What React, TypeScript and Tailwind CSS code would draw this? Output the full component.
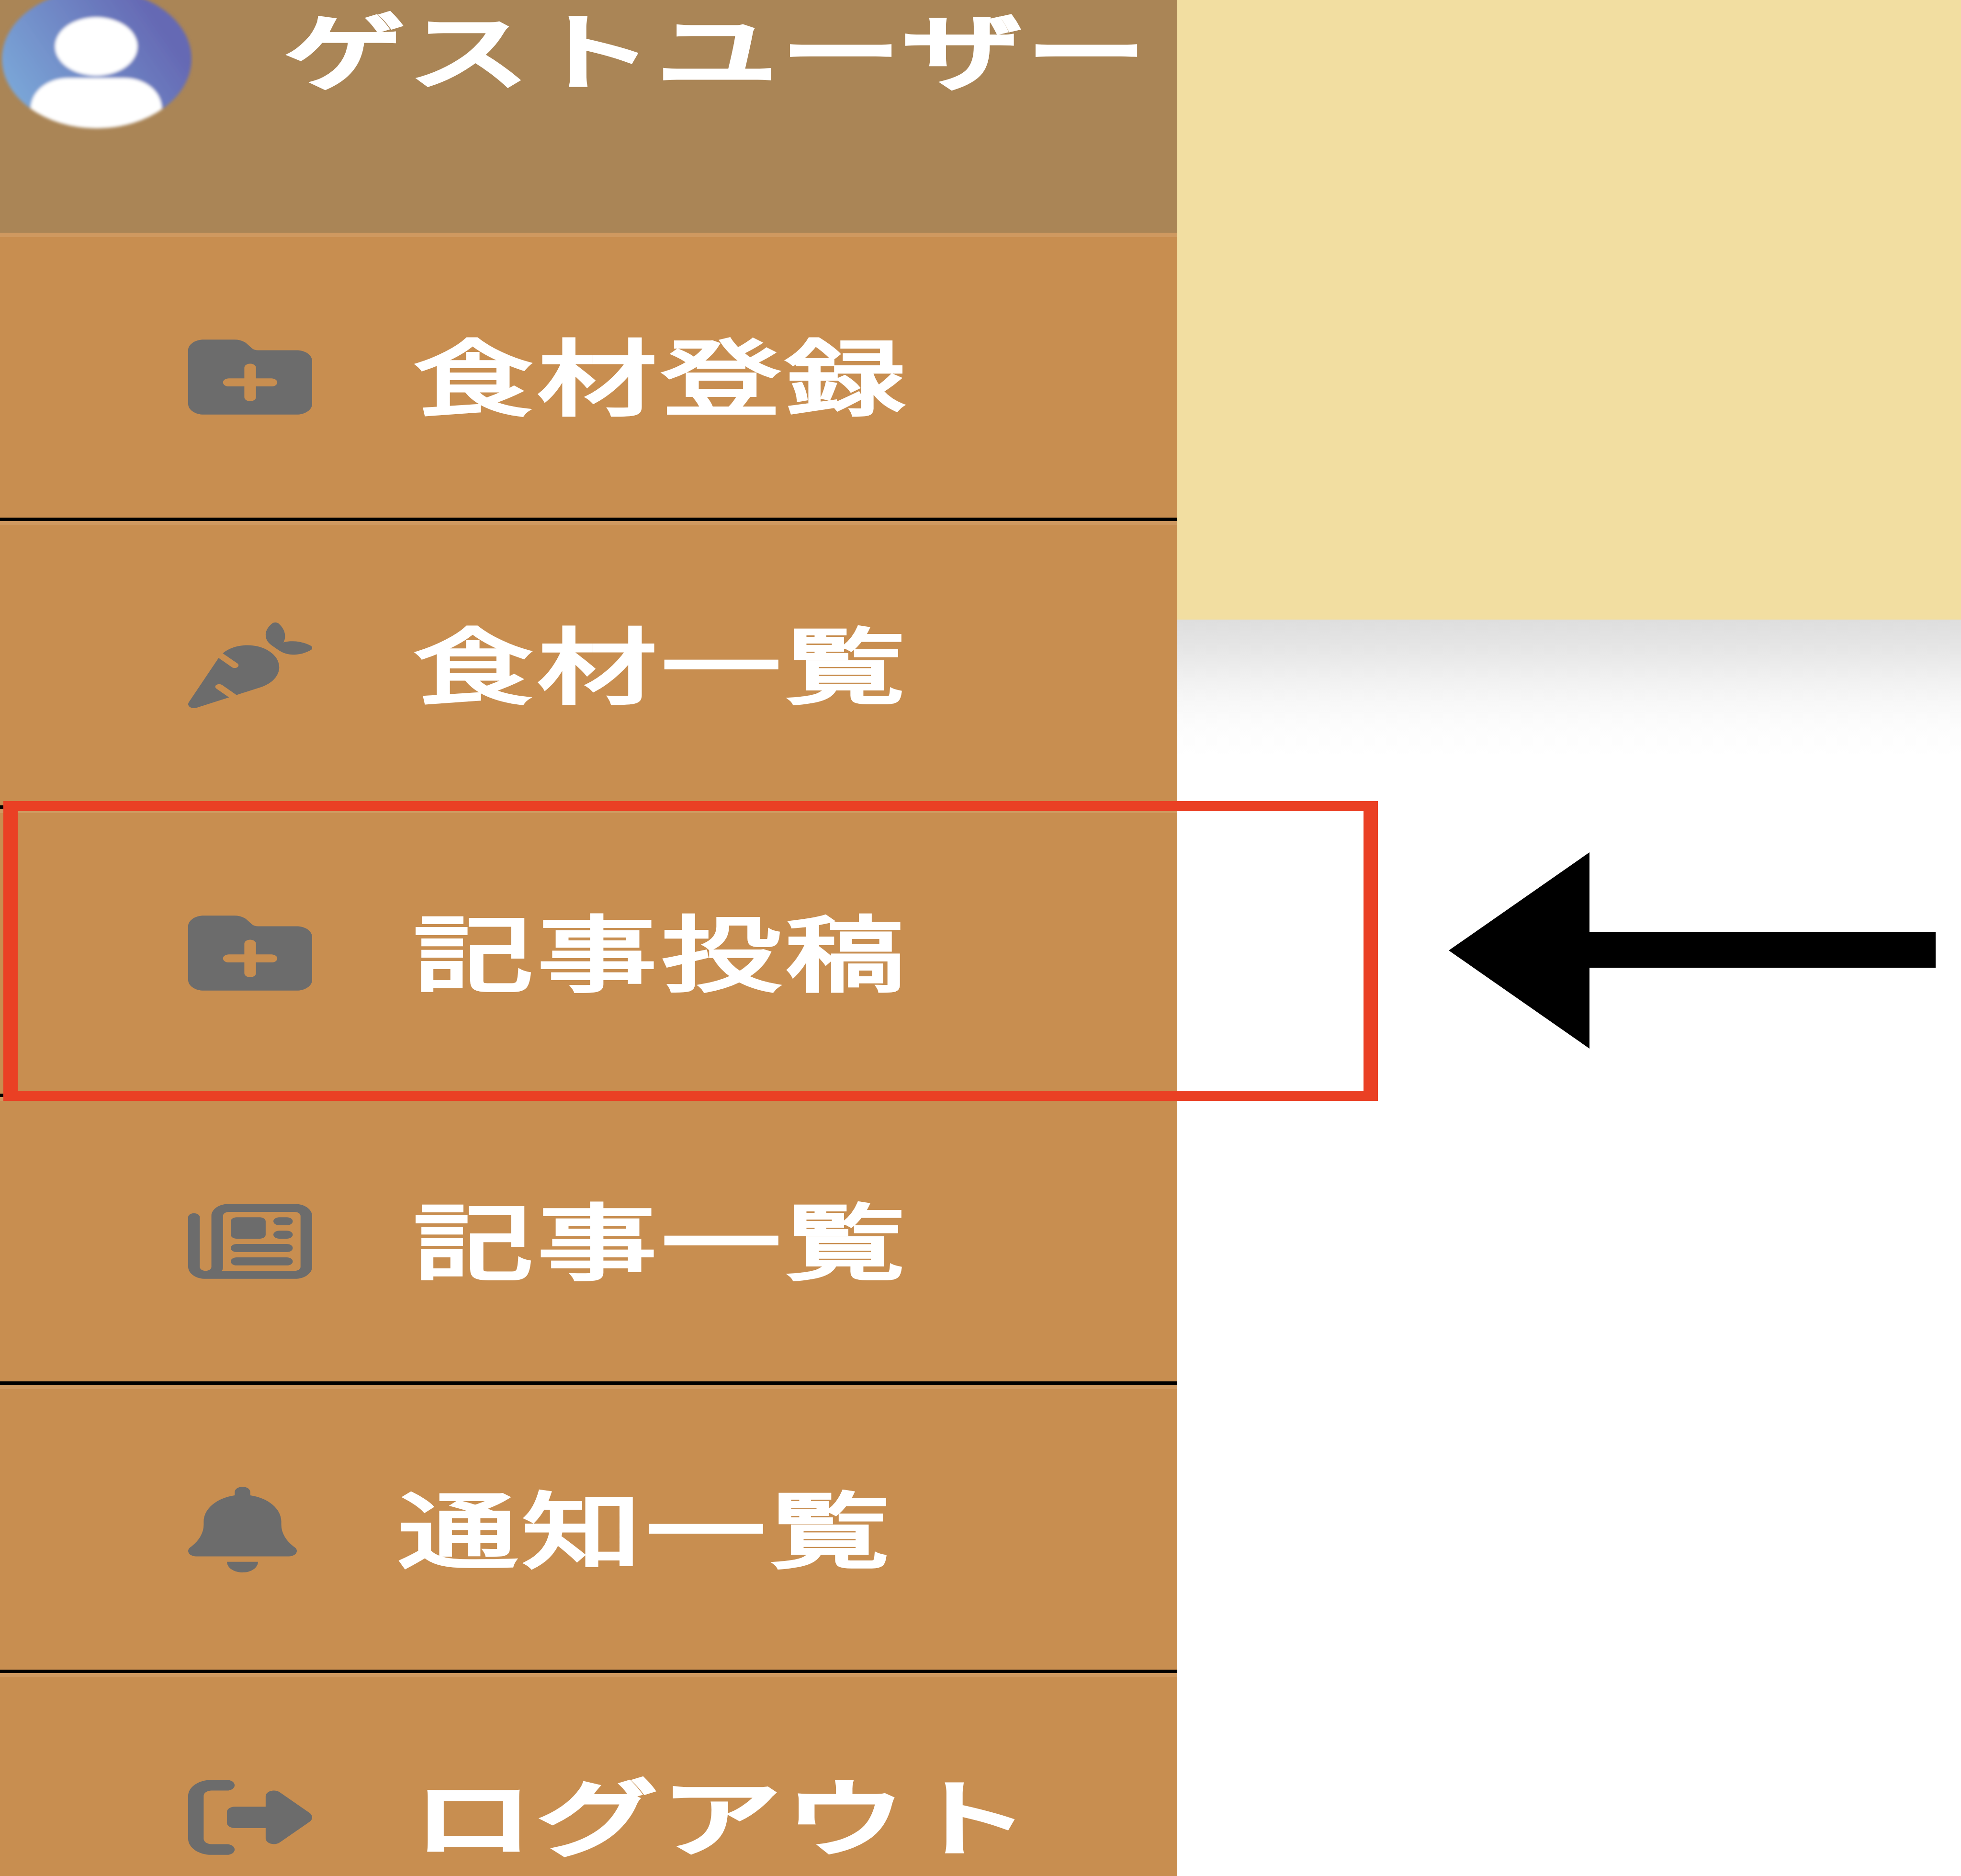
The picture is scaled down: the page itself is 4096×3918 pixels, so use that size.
import type { IconType } from "react-icons";
import {
  FaBell,
  FaCarrot,
  FaFolderPlus,
  FaRegNewspaper,
  FaRightFromBracket,
} from "react-icons/fa6";

type Item = { label: string; Icon: IconType; iconClass: string; kana?: boolean };

const items: Item[] = [
  { label: "食材登録", Icon: FaFolderPlus, iconClass: "w-[259px]" },
  { label: "食材一覧", Icon: FaCarrot, iconClass: "w-[259px]" },
  { label: "記事投稿", Icon: FaFolderPlus, iconClass: "w-[259px]" },
  { label: "記事一覧", Icon: FaRegNewspaper, iconClass: "w-[259px]" },
  { label: "通知一覧", Icon: FaBell, iconClass: "w-[227px]" },
  { label: "ログアウト", Icon: FaRightFromBracket, iconClass: "w-[259px]", kana: true },
];

function Label({ children, kana = false }: { children: string; kana?: boolean }) {
  const weight = kana ? "[-webkit-text-stroke:9px_white]" : "[-webkit-text-stroke:6px_white]";
  return (
    <span
      className={`-mt-5 block origin-left scale-x-[1.447] whitespace-nowrap text-[173px] leading-none font-normal tracking-[6px] text-white ${weight}`}
    >
      {children}
    </span>
  );
}

function Avatar() {
  return (
    <svg className="h-[280px] w-[404px] shrink-0" viewBox="0 0 404 280">
      <defs>
        <linearGradient id="sky" x1="0" y1="0.75" x2="0.85" y2="0.3">
          <stop offset="0" stopColor="#7cabda" />
          <stop offset="1" stopColor="#6569b4" />
        </linearGradient>
        <clipPath id="disc">
          <ellipse cx="202" cy="123" rx="198" ry="145" />
        </clipPath>
        <filter id="soft" x="-5%" y="-5%" width="110%" height="110%">
          <feGaussianBlur stdDeviation="3" />
        </filter>
      </defs>
      <g filter="url(#soft)">
        <g clipPath="url(#disc)">
          <rect y="-30" width="404" height="310" fill="url(#sky)" />
          <ellipse cx="201" cy="97" rx="86" ry="61" fill="#fff" />
          <path d="M64 228C64 190 100 163 142 163H260C302 163 338 190 338 228V280H64Z" fill="#fff" />
        </g>
      </g>
    </svg>
  );
}

function MenuRow({ label, Icon, iconClass, kana }: Item) {
  return (
    <li className="flex h-[601.6px] shrink-0 items-center gap-[211px] border-b-[7px] border-black bg-[#c88e50] pt-[9px] pl-[393px] shadow-[inset_0_9px_0_#cf9960]">
      <Icon preserveAspectRatio="none" className={`h-[179px] shrink-0 text-[#6c6c6c] ${iconClass}`} />
      <Label kana={kana}>{label}</Label>
    </li>
  );
}

export default function App() {
  return (
    <div
      lang="ja"
      className="relative flex h-[3918px] w-[4096px] overflow-hidden bg-white font-['Noto_Sans_CJK_JP',sans-serif]"
    >
      <aside className="flex h-full w-[2459px] shrink-0 flex-col overflow-hidden bg-[#c88e50]">
        <header className="flex h-[486px] shrink-0 items-start gap-[191px] bg-[#aa8556]">
          <Avatar />
          <div className="pt-[30px]">
            <Label kana>ゲストユーザー</Label>
          </div>
        </header>
        <ul className="flex flex-col">
          {items.map((item) => (
            <MenuRow key={item.label} {...item} />
          ))}
        </ul>
      </aside>
      <main className="flex flex-1 flex-col">
        <div className="h-[1294px] bg-[#f2dea1]" />
        <div className="h-[290px] bg-[linear-gradient(to_bottom,#dedede_0px,#e6e6e6_60px,#f1f1f1_126px,#f8f8f8_175px,#fcfcfc_218px,#ffffff_288px)]" />
      </main>
      <div className="absolute top-[1673px] left-[7px] h-[626px] w-[2871px] border-x-[30px] border-y-[21px] border-[#ea4024]" />
      <svg className="absolute top-[1780px] left-[3026px] h-[410px] w-[1017px]" viewBox="0 0 1017 410">
        <path d="M0 205L294 0V167H1017V241H294V410Z" fill="#000" />
      </svg>
    </div>
  );
}
